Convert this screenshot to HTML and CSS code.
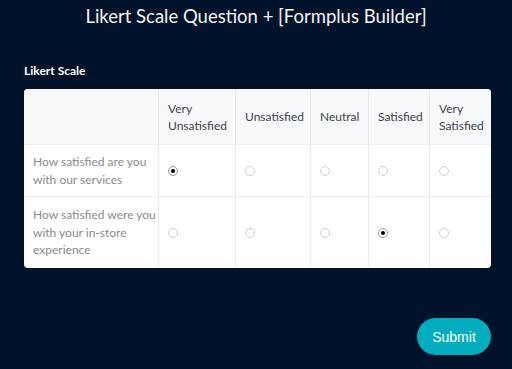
FILE: index.html
```html
<!DOCTYPE html>
<html>
<head>
<meta charset="utf-8">
<link rel="stylesheet" href="styles.css">
</head>
<body>
<h1 class="title">Likert Scale Question + [Formplus Builder]</h1>
<main class="form">
  <div class="label">Likert Scale</div>
  <div class="likert">
    <div class="cell head corner"></div>
    <div class="cell head">Very<br>Unsatisfied</div>
    <div class="cell head">Unsatisfied</div>
    <div class="cell head">Neutral</div>
    <div class="cell head">Satisfied</div>
    <div class="cell head last">Very<br>Satisfied</div>

    <div class="cell question">How satisfied are you<br>with our services</div>
    <div class="cell"><span class="radio checked"></span></div>
    <div class="cell"><span class="radio"></span></div>
    <div class="cell"><span class="radio"></span></div>
    <div class="cell"><span class="radio"></span></div>
    <div class="cell last"><span class="radio"></span></div>

    <div class="cell question bottom">How satisfied were you<br>with your in-store<br>experience</div>
    <div class="cell bottom"><span class="radio"></span></div>
    <div class="cell bottom"><span class="radio"></span></div>
    <div class="cell bottom"><span class="radio"></span></div>
    <div class="cell bottom"><span class="radio checked"></span></div>
    <div class="cell bottom last"><span class="radio"></span></div>
  </div>
  <div class="actions">
    <button class="submit">Submit</button>
  </div>
</main>
</body>
</html>
```

FILE: styles.css
```css
html, body {
  margin: 0;
  padding: 0;
  background: #01132a;
  height: 100%;
}
body {
  font-family: "Lato", "Open Sans", sans-serif;
  color: #fff;
}
.title {
  margin: 0;
  padding-top: 4px;
  font-size: 18.5px;
  line-height: 24px;
  font-weight: 400;
  text-align: center;
  color: #f4f4f4;
}
.form {
  padding: 0 21px 0 24px;
}
.label {
  margin-top: 35px;
  font-size: 12px;
  font-weight: 700;
  line-height: 16px;
  color: #fff;
}
.likert {
  margin-top: 10px;
  display: grid;
  grid-template-columns: 135px 77px 75px 58px 61px 1fr;
  grid-template-rows: 56px 52px 71px;
  background: #fff;
  border-radius: 4px;
  overflow: hidden;
}
.cell {
  display: flex;
  align-items: center;
  padding-left: 9px;
  border-right: 1px solid #e8eaed;
  border-bottom: 1px solid #eceef0;
  font-size: 12px;
  line-height: 17.5px;
  color: #3d414c;
}
.cell.last {
  border-right: none;
}
.cell.bottom {
  border-bottom: none;
}
.head {
  background: #f8f9fb;
  line-height: 17px;
}
.question {
  color: #8a8a8a;
}
.radio {
  box-sizing: border-box;
  width: 10px;
  height: 10px;
  border-radius: 50%;
  border: 1px solid #cfcfcf;
  background: #fff;
  display: flex;
  align-items: center;
  justify-content: center;
}
.radio.checked {
  border-color: #9a9a9a;
}
.radio.checked::after {
  content: "";
  width: 4px;
  height: 4px;
  border-radius: 50%;
  background: #000;
}
.actions {
  display: flex;
  justify-content: flex-end;
  margin-top: 50px;
}
.submit {
  width: 74px;
  height: 37px;
  border: none;
  border-radius: 19px;
  background: #00adbe;
  color: #fff;
  font-family: "Liberation Sans", Arial, sans-serif;
  font-size: 14px;
  padding: 0;
}
```
